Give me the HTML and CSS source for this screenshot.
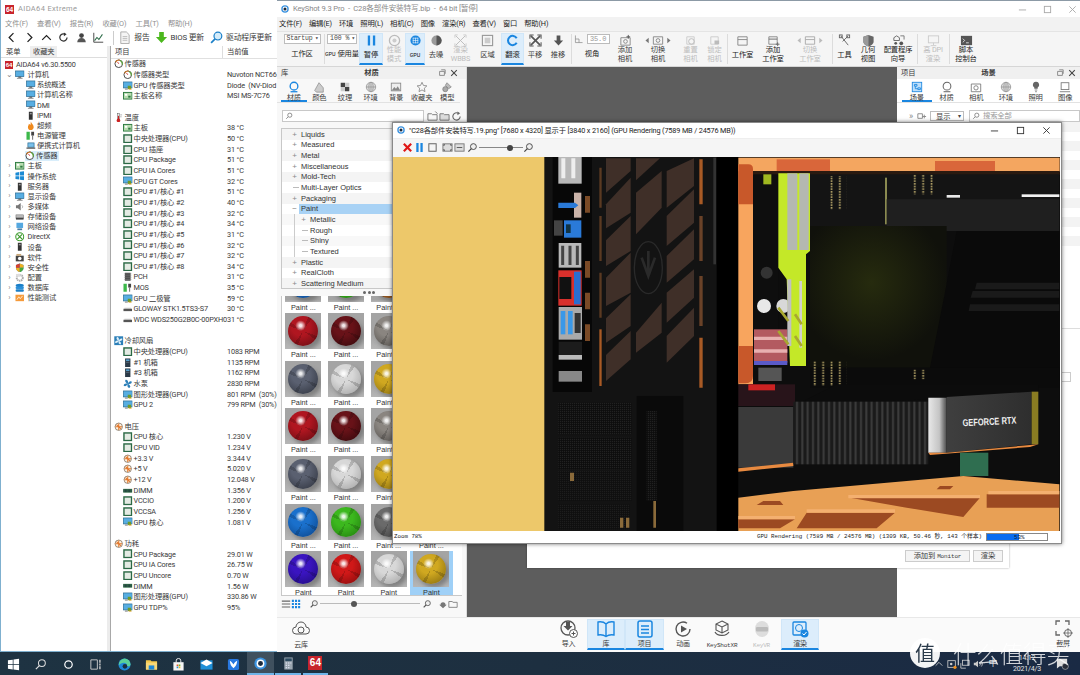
FILE: index.html
```html
<!DOCTYPE html>
<html lang="zh-CN">
<head>
<meta charset="utf-8">
<title>KeyShot</title>
<link rel="stylesheet" href="styles.css">
</head>
<body>
<svg class="defs" aria-hidden="true">
  <defs>
    <symbol id="chip" viewBox="0 0 10 10"><rect x="1" y="1" width="8" height="8" fill="#e4ebe4" stroke="#2c6a46" stroke-width="1.5"/></symbol>
    <symbol id="board" viewBox="0 0 10 10"><rect x=".5" y="1.5" width="9" height="7" fill="#b8dcb0" stroke="#2c7a40"/><rect x="2" y="3" width="2.5" height="2" fill="#fff"/><rect x="5.5" y="5" width="2.5" height="2" fill="#2c7a40"/></symbol>
    <symbol id="mon" viewBox="0 0 10 10"><rect x=".5" y="1" width="9" height="6" fill="#58aee2" stroke="#27688f" stroke-width=".7"/><rect x="3.5" y="7" width="3" height="1.2" fill="#555"/><rect x="2" y="8.2" width="6" height="1" fill="#888"/></symbol>
    <symbol id="gpu" viewBox="0 0 10 10"><rect x=".3" y="1" width="9.4" height="6.3" fill="#58aee2" stroke="#27688f" stroke-width=".7"/><rect x="5" y="5" width="3.5" height="3.5" fill="#6e9a2c"/><rect x="6" y="8" width="3" height="1" fill="#e0a020"/><rect x="2" y="8" width="3" height="1" fill="#777"/></symbol>
    <symbol id="gauge" viewBox="0 0 10 10"><circle cx="5" cy="5" r="4" fill="#fff" stroke="#444"/><path d="M1.6 3.5A4 4 0 0 1 6 1.2" fill="none" stroke="#d9781f" stroke-width="1.2"/><path d="M6.5 1.5A4 4 0 0 1 8.6 6" fill="none" stroke="#5aa83a" stroke-width="1.2"/><path d="M5 5 3.6 3" stroke="#c22" stroke-width=".9"/></symbol>
    <symbol id="therm" viewBox="0 0 10 10"><rect x="3.6" y=".5" width="2.2" height="6.5" fill="#eee" stroke="#555" stroke-width=".5"/><rect x="4.1" y="3" width="1.2" height="4" fill="#c22"/><circle cx="4.7" cy="7.8" r="1.9" fill="#c22"/><path d="M6.5 2h2M6.5 4h1.5" stroke="#777" stroke-width=".6"/></symbol>
    <symbol id="fan" viewBox="0 0 10 10"><rect x=".3" y=".3" width="9.4" height="9.4" fill="#2c7fb8"/><path d="M5 5C3 4 2 2.500 3 1.200 4.500 1 5.800 2.500 5 5ZM5 5C6 3 7.500 2 8.800 3 9 4.500 7.500 5.800 5 5ZM5 5C7 6 8 7.500 7 8.800 5.500 9 4.200 7.500 5 5ZM5 5C4 7 2.500 8 1.200 7 1 5.500 2.500 4.200 5 5Z" fill="#dff0fa"/></symbol>
    <symbol id="fan2" viewBox="0 0 10 10"><path d="M5 5C3 4 1.500 2.500 2.800 .8 4.800 .4 6 2.500 5 5ZM5 5C6 3 7.500 1.500 9.200 2.800 9.600 4.800 7.500 6 5 5ZM5 5C7 6 8.500 7.500 7.200 9.200 5.200 9.600 4 7.500 5 5ZM5 5C4 7 2.500 8.500 .8 7.200 .4 5.200 2.500 4 5 5Z" fill="#2c7fb8"/></symbol>
    <symbol id="volt" viewBox="0 0 10 10"><circle cx="5" cy="5" r="3.900" fill="#fff3e2" stroke="#6a5a48" stroke-width=".7"/><path d="M5 1.500V8.500M1.500 5H8.500M2.700 2.700 7.300 7.300" stroke="#e2762a" stroke-width="1.100"/></symbol>
    <symbol id="ram" viewBox="0 0 10 10"><rect x=".2" y="3" width="9.600" height="4" fill="#3c7a50"/><path d="M1 3.500v3M2.500 3.500v3M4 3.500v3M5.500 3.500v3M7 3.500v3M8.500 3.500v3" stroke="#123" stroke-width=".7"/></symbol>
    <symbol id="hdd" viewBox="0 0 10 10"><rect x=".5" y="5" width="9" height="2.500" fill="#555"/><rect x="1.500" y="4" width="7" height="1.200" fill="#bbb"/></symbol>
    <symbol id="tower" viewBox="0 0 10 10"><rect x="2.200" y=".5" width="5.600" height="9" fill="#2b3a48"/><rect x="3.200" y="1.500" width="3.600" height="1.600" fill="#5aa8d8"/><rect x="3.200" y="4" width="3.600" height="1" fill="#5a6a78"/></symbol>
    <symbol id="pch" viewBox="0 0 10 10"><rect x="2" y=".8" width="6" height="8.400" fill="#4a4a4a"/><path d="M1 2h8M1 4h8M1 6h8M1 8h8" stroke="#888" stroke-width=".5"/></symbol>
    <symbol id="mos" viewBox="0 0 10 10"><rect x=".5" y=".8" width="3.500" height="8.400" fill="#3cb84a"/><rect x="5.500" y=".8" width="3" height="4" fill="#444"/><rect x="6.500" y="4.800" width="1" height="4.400" fill="#666"/></symbol>
    <symbol id="fire" viewBox="0 0 10 10"><path d="M5 .5C6 3 8.500 4 8 7c-.4 2-2 2.500-3 2.500S2 9 2 6.500c0-1.500 1-2 1-3.500 1 .5 1.500 1 1.500 1.500C5 3 5 2 5 .5Z" fill="#ef8a1e"/></symbol>
    <symbol id="lap" viewBox="0 0 10 10"><rect x="2" y="2" width="6.500" height="4.500" fill="#7ac0ea" stroke="#27688f" stroke-width=".7"/><path d="M.5 7.500h9.500" stroke="#555" stroke-width="1.300"/></symbol>
    <symbol id="win" viewBox="0 0 10 10"><path d="M.5 1.800 4.500 1v3.700H.5ZM5.300.9 9.500.2v4.500H5.300ZM.5 5.400h4v3.600l-4-.7ZM5.300 5.400h4.200v4.400L5.300 9.100Z" fill="#1a8ad4"/></symbol>
    <symbol id="spk" viewBox="0 0 10 10"><path d="M1 3.500h2L6 1v8L3 6.500H1Z" fill="#777"/><path d="M7.300 3.500c1 1 1 2 0 3" stroke="#999" fill="none" stroke-width=".8"/></symbol>
    <symbol id="stor" viewBox="0 0 10 10"><rect x="1" y="3" width="8" height="4" fill="#bbb" stroke="#666" stroke-width=".5"/><rect x="1" y="6" width="8" height="2" fill="#444"/></symbol>
    <symbol id="net" viewBox="0 0 10 10"><rect x="1.500" y=".8" width="7" height="5.500" fill="#55a8e0"/><rect x="2.500" y="6.800" width="5" height="1.800" fill="#4a7aa0"/></symbol>
    <symbol id="xbox" viewBox="0 0 10 10"><circle cx="5" cy="5" r="4.200" fill="#fff" stroke="#3a9a2a" stroke-width="1.100"/><path d="M2.500 2.500 7.500 7.500M7.500 2.500 2.500 7.500" stroke="#3a9a2a" stroke-width="1.200"/></symbol>
    <symbol id="dev" viewBox="0 0 10 10"><rect x="3" y=".8" width="4" height="8.400" fill="#333"/><rect x="4" y="2" width="2" height="1.500" fill="#999"/></symbol>
    <symbol id="soft" viewBox="0 0 10 10"><rect x=".8" y="2.800" width="8.400" height="6" fill="#444"/><circle cx="5" cy="5.800" r="1.900" fill="#fff"/><rect x="1.500" y="1" width="5" height="2" fill="#c9a87a"/></symbol>
    <symbol id="shield" viewBox="0 0 10 10"><path d="M5 .5 9 2v3c0 2.500-2 4-4 4.800C3 9 1 7.500 1 5V2Z" fill="#3a8fd4"/><path d="M5 .5 9 2v3H5ZM5 5H1c0 2.500 2 4 4 4.800Z" fill="#f0b020"/><path d="M5 5H1V2L5 .5Z" fill="#d8402a"/><path d="M5 5h4c0 2.500-2 4-4 4.800Z" fill="#4aa83a"/></symbol>
    <symbol id="conf" viewBox="0 0 10 10"><circle cx="5" cy="5" r="3.200" fill="none" stroke="#aaa" stroke-width="2" stroke-dasharray="1.500 .6"/><rect x="1" y="1" width="5" height="3" fill="#ddd"/></symbol>
    <symbol id="db" viewBox="0 0 10 10"><ellipse cx="5" cy="2.500" rx="4.300" ry="1.700" fill="#1a7fc8"/><rect x=".7" y="3.800" width="8.600" height="2.400" rx="1" fill="#2c90d8"/><rect x=".7" y="6.700" width="8.600" height="2.500" rx="1" fill="#1a7fc8"/></symbol>
    <symbol id="bench" viewBox="0 0 10 10"><rect x=".5" y="1.800" width="9" height="6.800" fill="#f59a3a"/><path d="M2 7l2-3 1.500 2L8 3" stroke="#fff" fill="none" stroke-width=".8"/></symbol>
    <symbol id="logo64" viewBox="0 0 10 10"><rect width="10" height="10" fill="#c8242c"/></symbol>
    <symbol id="ksdot" viewBox="0 0 10 10"><circle cx="5" cy="5" r="4.700" fill="#3b93e0"/><circle cx="5" cy="5" r="3" fill="#fff"/><circle cx="5" cy="5" r="1.900" fill="#1c2a3c"/></symbol>
  </defs>
</svg>

<main class="desk">
  <div class="windows">

    <!-- AIDA64 -->
    <section class="win aida">
      <header class="a-title">
        <span class="a-logo">64</span><span>AIDA64 Extreme</span>
      </header>
      <nav class="a-menu"><span>文件(F)</span><span>查看(V)</span><span>报告(R)</span><span>收藏(O)</span><span>工具(T)</span><span>帮助(H)</span></nav>
      <div class="a-tools">
        <svg class="at" viewBox="0 0 14 14"><path d="M9.500 1.500 4 7l5.500 5.500" fill="none" stroke="#222" stroke-width="1.600"/></svg>
        <svg class="at" viewBox="0 0 14 14"><path d="M4.500 1.500 10 7l-5.500 5.500" fill="none" stroke="#222" stroke-width="1.600"/></svg>
        <svg class="at" viewBox="0 0 14 14"><path d="M1.500 10 7 4.500 12.500 10" fill="none" stroke="#222" stroke-width="1.600"/></svg>
        <svg class="at" viewBox="0 0 14 14"><path d="M11.500 7A4.600 4.600 0 1 1 9 2.800" fill="none" stroke="#333" stroke-width="1.600"/><path d="M7.500 .5 11 3 7.500 5.500Z" fill="#333"/></svg>
        <svg class="at" viewBox="0 0 14 14"><circle cx="7" cy="4.500" r="3" fill="#444"/><path d="M1.500 13c.5-4 2.500-5.500 5.500-5.500S12 9 12.500 13Z" fill="#555"/></svg>
        <svg class="at" viewBox="0 0 14 14"><path d="M1 1v12h12" fill="none" stroke="#333" stroke-width="1.100"/><path d="M2 11l3-4 2.500 2.500L12 3" fill="none" stroke="#2a6a46" stroke-width="1.300"/></svg>
        <span class="a-vsep"></span>
        <svg class="at big" viewBox="0 0 14 14"><path d="M3 1h6l3 3v9.500H3Z" fill="#f5f5f5" stroke="#aaa"/><path d="M5 6h5M5 8h5M5 10h5" stroke="#bbb"/></svg>
        <span class="a-tl">报告</span>
        <svg class="at big mlt" viewBox="0 0 14 14"><path d="M4.500 1h5v5.500h3.500L7 13 1 6.500h3.500Z" fill="#4cb81e"/></svg>
        <span class="a-tl">BIOS 更新</span>
        <svg class="at big mlt2" viewBox="0 0 14 14"><circle cx="8.500" cy="5.500" r="4.200" fill="#d4ecfa" stroke="#1a7fc8" stroke-width="1.300"/><path d="M5.500 8.500 1.200 12.800" stroke="#1a7fc8" stroke-width="1.800"/></svg>
        <span class="a-tl">驱动程序更新</span>
      </div>
      <div class="a-body">
        <aside class="a-left">
          <div class="a-tabs"><span class="a-tab on">菜单</span><span class="a-tab off">收藏夹</span></div>
          <div class="tree">
            <div class="t root"><span class="a-logo sm">64</span><span>AIDA64 v6.30.5500</span></div>
            <div class="t l1"><i class="ar">⌄</i><svg class="ic"><use href="#mon"/></svg><span>计算机</span></div>
            <div class="t l2"><svg class="ic"><use href="#mon"/></svg><span>系统概述</span></div>
            <div class="t l2"><svg class="ic"><use href="#mon"/></svg><span>计算机名称</span></div>
            <div class="t l2"><svg class="ic"><use href="#mon"/></svg><span>DMI</span></div>
            <div class="t l2"><svg class="ic"><use href="#dev"/></svg><span>IPMI</span></div>
            <div class="t l2"><svg class="ic"><use href="#fire"/></svg><span>超频</span></div>
            <div class="t l2"><svg class="ic"><use href="#mos"/></svg><span>电源管理</span></div>
            <div class="t l2"><svg class="ic"><use href="#lap"/></svg><span>便携式计算机</span></div>
            <div class="t l2"><span class="sel"><svg class="ic"><use href="#gauge"/></svg><span>传感器</span></span></div>
            <div class="t l1"><i class="ar">›</i><svg class="ic"><use href="#board"/></svg><span>主板</span></div>
            <div class="t l1"><i class="ar">›</i><svg class="ic"><use href="#win"/></svg><span>操作系统</span></div>
            <div class="t l1"><i class="ar">›</i><svg class="ic"><use href="#dev"/></svg><span>服务器</span></div>
            <div class="t l1"><i class="ar">›</i><svg class="ic"><use href="#mon"/></svg><span>显示设备</span></div>
            <div class="t l1"><i class="ar">›</i><svg class="ic"><use href="#spk"/></svg><span>多媒体</span></div>
            <div class="t l1"><i class="ar">›</i><svg class="ic"><use href="#stor"/></svg><span>存储设备</span></div>
            <div class="t l1"><i class="ar">›</i><svg class="ic"><use href="#net"/></svg><span>网络设备</span></div>
            <div class="t l1"><i class="ar">›</i><svg class="ic"><use href="#xbox"/></svg><span>DirectX</span></div>
            <div class="t l1"><i class="ar">›</i><svg class="ic"><use href="#dev"/></svg><span>设备</span></div>
            <div class="t l1"><i class="ar">›</i><svg class="ic"><use href="#soft"/></svg><span>软件</span></div>
            <div class="t l1"><i class="ar">›</i><svg class="ic"><use href="#shield"/></svg><span>安全性</span></div>
            <div class="t l1"><i class="ar">›</i><svg class="ic"><use href="#conf"/></svg><span>配置</span></div>
            <div class="t l1"><i class="ar">›</i><svg class="ic"><use href="#db"/></svg><span>数据库</span></div>
            <div class="t l1"><i class="ar">›</i><svg class="ic"><use href="#bench"/></svg><span>性能测试</span></div>
          </div>
        </aside>
        <div class="a-split"></div>
        <div class="a-right">
          <div class="a-head"><span class="h1">项目</span><span class="h2">当前值</span></div>
          <div class="list">
            <div class="r s"><span class="n"><svg class="ic"><use href="#gauge"/></svg>传感器</span></div>
            <div class="r"><span class="n"><svg class="ic"><use href="#gauge"/></svg>传感器类型</span><span class="v">Nuvoton NCT66</span></div>
            <div class="r"><span class="n"><svg class="ic"><use href="#gpu"/></svg>GPU 传感器类型</span><span class="v">Diode  (NV-Diod</span></div>
            <div class="r"><span class="n"><svg class="ic"><use href="#board"/></svg>主板名称</span><span class="v">MSI MS-7C76</span></div>
            <div class="r"></div>
            <div class="r s"><span class="n"><svg class="ic"><use href="#therm"/></svg>温度</span></div>
            <div class="r"><span class="n"><svg class="ic"><use href="#board"/></svg>主板</span><span class="v">38 °C</span></div>
            <div class="r"><span class="n"><svg class="ic"><use href="#chip"/></svg>中央处理器(CPU)</span><span class="v">50 °C</span></div>
            <div class="r"><span class="n"><svg class="ic"><use href="#chip"/></svg>CPU 插座</span><span class="v">31 °C</span></div>
            <div class="r"><span class="n"><svg class="ic"><use href="#chip"/></svg>CPU Package</span><span class="v">51 °C</span></div>
            <div class="r"><span class="n"><svg class="ic"><use href="#chip"/></svg>CPU IA Cores</span><span class="v">51 °C</span></div>
            <div class="r"><span class="n"><svg class="ic"><use href="#gpu"/></svg>CPU GT Cores</span><span class="v">32 °C</span></div>
            <div class="r"><span class="n"><svg class="ic"><use href="#chip"/></svg>CPU #1/核心 #1</span><span class="v">51 °C</span></div>
            <div class="r"><span class="n"><svg class="ic"><use href="#chip"/></svg>CPU #1/核心 #2</span><span class="v">40 °C</span></div>
            <div class="r"><span class="n"><svg class="ic"><use href="#chip"/></svg>CPU #1/核心 #3</span><span class="v">32 °C</span></div>
            <div class="r"><span class="n"><svg class="ic"><use href="#chip"/></svg>CPU #1/核心 #4</span><span class="v">34 °C</span></div>
            <div class="r"><span class="n"><svg class="ic"><use href="#chip"/></svg>CPU #1/核心 #5</span><span class="v">31 °C</span></div>
            <div class="r"><span class="n"><svg class="ic"><use href="#chip"/></svg>CPU #1/核心 #6</span><span class="v">32 °C</span></div>
            <div class="r"><span class="n"><svg class="ic"><use href="#chip"/></svg>CPU #1/核心 #7</span><span class="v">32 °C</span></div>
            <div class="r"><span class="n"><svg class="ic"><use href="#chip"/></svg>CPU #1/核心 #8</span><span class="v">34 °C</span></div>
            <div class="r"><span class="n"><svg class="ic"><use href="#pch"/></svg>PCH</span><span class="v">31 °C</span></div>
            <div class="r"><span class="n"><svg class="ic"><use href="#mos"/></svg>MOS</span><span class="v">35 °C</span></div>
            <div class="r"><span class="n"><svg class="ic"><use href="#gpu"/></svg>GPU 二极管</span><span class="v">59 °C</span></div>
            <div class="r"><span class="n"><svg class="ic"><use href="#hdd"/></svg>GLOWAY STK1.5TS3-S7</span><span class="v">30 °C</span></div>
            <div class="r"><span class="n"><svg class="ic"><use href="#hdd"/></svg>WDC WDS250G2B0C-00PXH0</span><span class="v">31 °C</span></div>
            <div class="r"></div>
            <div class="r s"><span class="n"><svg class="ic"><use href="#fan"/></svg>冷却风扇</span></div>
            <div class="r"><span class="n"><svg class="ic"><use href="#chip"/></svg>中央处理器(CPU)</span><span class="v">1083 RPM</span></div>
            <div class="r"><span class="n"><svg class="ic"><use href="#tower"/></svg>#1 机箱</span><span class="v">1135 RPM</span></div>
            <div class="r"><span class="n"><svg class="ic"><use href="#tower"/></svg>#3 机箱</span><span class="v">1162 RPM</span></div>
            <div class="r"><span class="n"><svg class="ic"><use href="#fan2"/></svg>水泵</span><span class="v">2830 RPM</span></div>
            <div class="r"><span class="n"><svg class="ic"><use href="#gpu"/></svg>图形处理器(GPU)</span><span class="v">801 RPM  (30%)</span></div>
            <div class="r"><span class="n"><svg class="ic"><use href="#gpu"/></svg>GPU 2</span><span class="v">799 RPM  (30%)</span></div>
            <div class="r"></div>
            <div class="r s"><span class="n"><svg class="ic"><use href="#volt"/></svg>电压</span></div>
            <div class="r"><span class="n"><svg class="ic"><use href="#chip"/></svg>CPU 核心</span><span class="v">1.230 V</span></div>
            <div class="r"><span class="n"><svg class="ic"><use href="#chip"/></svg>CPU VID</span><span class="v">1.234 V</span></div>
            <div class="r"><span class="n"><svg class="ic"><use href="#volt"/></svg>+3.3 V</span><span class="v">3.344 V</span></div>
            <div class="r"><span class="n"><svg class="ic"><use href="#volt"/></svg>+5 V</span><span class="v">5.020 V</span></div>
            <div class="r"><span class="n"><svg class="ic"><use href="#volt"/></svg>+12 V</span><span class="v">12.048 V</span></div>
            <div class="r"><span class="n"><svg class="ic"><use href="#ram"/></svg>DIMM</span><span class="v">1.356 V</span></div>
            <div class="r"><span class="n"><svg class="ic"><use href="#chip"/></svg>VCCIO</span><span class="v">1.200 V</span></div>
            <div class="r"><span class="n"><svg class="ic"><use href="#chip"/></svg>VCCSA</span><span class="v">1.256 V</span></div>
            <div class="r"><span class="n"><svg class="ic"><use href="#gpu"/></svg>GPU 核心</span><span class="v">1.081 V</span></div>
            <div class="r"></div>
            <div class="r s"><span class="n"><svg class="ic"><use href="#volt"/></svg>功耗</span></div>
            <div class="r"><span class="n"><svg class="ic"><use href="#chip"/></svg>CPU Package</span><span class="v">29.01 W</span></div>
            <div class="r"><span class="n"><svg class="ic"><use href="#chip"/></svg>CPU IA Cores</span><span class="v">26.75 W</span></div>
            <div class="r"><span class="n"><svg class="ic"><use href="#chip"/></svg>CPU Uncore</span><span class="v">0.70 W</span></div>
            <div class="r"><span class="n"><svg class="ic"><use href="#ram"/></svg>DIMM</span><span class="v">1.56 W</span></div>
            <div class="r"><span class="n"><svg class="ic"><use href="#gpu"/></svg>图形处理器(GPU)</span><span class="v">330.86 W</span></div>
            <div class="r"><span class="n"><svg class="ic"><use href="#gpu"/></svg>GPU TDP%</span><span class="v">95%</span></div>
          </div>
        </div>
      </div>
    </section>

    <!-- KeyShot -->
    <section class="win ks">
      <header class="k-title">
        <svg class="ki"><use href="#ksdot"/></svg>
        <span class="k-name">KeyShot 9.3 Pro  -  C28各部件安装特写.bip  -  64 bit [暂停]</span>
        <div class="ctl faded">
          <svg viewBox="0 0 10 10"><path d="M1 5.500h8" stroke="currentColor"/></svg>
          <svg viewBox="0 0 10 10"><rect x="1.500" y="1.500" width="7" height="7" fill="none" stroke="currentColor"/></svg>
          <svg viewBox="0 0 10 10"><path d="M1.500 1.500l7 7M8.500 1.500l-7 7" stroke="currentColor"/></svg>
        </div>
      </header>
      <nav class="k-menu"><span>文件(F)</span><span>编辑(E)</span><span>环境</span><span>照明(L)</span><span>相机(C)</span><span>图像</span><span>渲染(R)</span><span>查看(V)</span><span>窗口</span><span>帮助(H)</span></nav>
      <div class="k-tools">
        <div class="grp w42"><span class="select wide">Startup<i>▾</i></span><span class="lab">工作区</span></div>
        <span class="sep"></span>
        <div class="grp w34"><span class="select">100 %<i>▾</i></span><span class="lab nw"><tt>GPU</tt> 使用量</span></div>
        <div class="btn w24 act"><svg viewBox="0 0 14 14"><path d="M3 1.500h2.500v11H3ZM8.500 1.500H11v11H8.500Z" fill="#1a86e0"/></svg><span class="lab blk">暂停</span></div>
        <div class="btn w22 dim"><svg viewBox="0 0 14 14"><circle cx="7" cy="7" r="5.500" fill="none" stroke="#bbb" stroke-width="1.400"/><circle cx="7" cy="7" r="2.200" fill="#ccc"/></svg><span class="lab">性能<br>模式</span></div>
        <div class="btn w20 act"><svg viewBox="0 0 14 14"><circle cx="7" cy="7" r="5.500" fill="#1a86e0"/><path d="M4 4.500h6M4 7h6M4 9.500h6M4.500 4v6M7 4v6M9.500 4v6" stroke="#fff" stroke-width=".6"/></svg><span class="lab blk"><tt>GPU</tt></span></div>
        <div class="btn w22"><svg viewBox="0 0 14 14"><circle cx="7" cy="7" r="5.500" fill="#9a9a9a"/><path d="M7 1.500a5.500 5.500 0 0 1 0 11Z" fill="#555"/></svg><span class="lab">去噪</span></div>
        <div class="btn w27 dim"><svg viewBox="0 0 14 14"><path d="M2 2l10 10M12 2 2 12" stroke="#bbb" stroke-width="1"/><path d="M1 4V1h3M10 1h3v3M13 10v3h-3M4 13H1v-3" fill="none" stroke="#ccc"/></svg><span class="lab">渲染<br>WBBS</span></div>
        <div class="btn w27"><svg viewBox="0 0 14 14"><rect x="1.500" y="1.500" width="11" height="11" fill="none" stroke="#999" stroke-width="1.200"/><rect x="4" y="4" width="6" height="6" fill="#ccc"/></svg><span class="lab">区域</span></div>
        <div class="btn w23 act"><svg viewBox="0 0 14 14"><path d="M11.500 9.500A5 5 0 1 1 11.500 4.500" fill="none" stroke="#1a86e0" stroke-width="2.200"/></svg><span class="lab blk">翻滚</span></div>
        <div class="btn w22"><svg viewBox="0 0 14 14"><path d="M2 2l10 10M12 2 2 12" stroke="#555" stroke-width="1.800"/><path d="M1 5V1h4M9 1h4v4M13 9v4H9M5 13H1V9" fill="none" stroke="#555" stroke-width="1.100"/></svg><span class="lab">平移</span></div>
        <div class="btn w24"><svg viewBox="0 0 14 14"><path d="M5 1.500h4v5.500h3L7 12.500 2 7h3Z" fill="#555"/></svg><span class="lab">推移</span></div>
        <span class="sep"></span>
        <div class="grp w40"><div class="fov"><svg viewBox="0 0 14 14"><path d="M2 2v10h10M2 7h5v5" fill="none" stroke="#888"/></svg><span class="num">35.0</span></div><span class="lab">视角</span></div>
        <div class="btn w26"><svg viewBox="0 0 14 14"><path d="M2 4h10v8H2Z" fill="none" stroke="#888"/><circle cx="7" cy="8" r="2" fill="none" stroke="#888"/><path d="M10 1v4M8 3h4" stroke="#555"/></svg><span class="lab">添加<br>相机</span></div>
        <div class="btn w40"><svg class="wideic" viewBox="0 0 30 14"><path d="M5 4 1.500 7 5 10Z M25 4 28.500 7 25 10Z" fill="#777"/><path d="M10 3h10v8H10Z" fill="none" stroke="#888"/><circle cx="15" cy="7" r="2" fill="none" stroke="#888"/></svg><span class="lab">切换<br>相机</span></div>
        <div class="btn w25 dim"><svg viewBox="0 0 14 14"><path d="M3 3h8v8H3Z" fill="none" stroke="#ccc"/><circle cx="8" cy="8" r="3" fill="none" stroke="#bbb"/></svg><span class="lab">重置<br>相机</span></div>
        <div class="btn w23 dim"><svg viewBox="0 0 14 14"><path d="M3 3h8v8H3Z" fill="none" stroke="#ccc"/><rect x="7" y="7" width="5" height="4" fill="#bbb"/></svg><span class="lab">锁定<br>相机</span></div>
        <span class="sep"></span>
        <div class="btn w29"><svg viewBox="0 0 14 14"><path d="M2 3h10v9H2Z" fill="none" stroke="#888"/><path d="M2 6h10" stroke="#888"/></svg><span class="lab blk">工作室</span></div>
        <div class="btn w32"><svg viewBox="0 0 14 14"><path d="M2 3h9v8H2Z" fill="none" stroke="#888"/><path d="M2 5.500h9M11.500 9v4M9.500 11h4" stroke="#666"/></svg><span class="lab blk">添加<br>工作室</span></div>
        <div class="btn w42 dim"><svg class="wideic" viewBox="0 0 30 14"><path d="M5 4 1.500 7 5 10Z M25 4 28.500 7 25 10Z" fill="#bbb"/><path d="M10 3h10v8H10ZM10 6h10" fill="none" stroke="#aaa"/></svg><span class="lab">切换<br>工作室</span></div>
        <span class="sep"></span>
        <div class="btn w23"><svg viewBox="0 0 14 14"><path d="M3 2l8 10M11 2 5 8" stroke="#666" fill="none"/><rect x="1.500" y="1" width="3" height="3" fill="none" stroke="#666"/><rect x="9.500" y="1" width="3" height="3" fill="none" stroke="#666"/></svg><span class="lab blk">工具</span></div>
        <div class="btn w24"><svg viewBox="0 0 14 14"><path d="M7 1 12.500 3v5c0 3-3 4.500-5.500 5.500C4.500 12.500 1.500 11 1.500 8V3Z" fill="#666"/><path d="M7 1v12.500C4.500 12.500 1.500 11 1.500 8V3Z" fill="#999"/></svg><span class="lab blk">几何<br>视图</span></div>
        <div class="btn w36"><svg viewBox="0 0 14 14"><path d="M2 4l3-2 3 2v3H2Z" fill="none" stroke="#666"/><circle cx="4" cy="10" r="1.500" fill="#555"/><circle cx="10" cy="10" r="2" fill="#555"/><path d="M9 2h4v4" fill="none" stroke="#777"/></svg><span class="lab blk">配置程序<br>向导</span></div>
        <span class="sep"></span>
        <div class="btn w30 dim"><svg viewBox="0 0 14 14"><rect x="1.500" y="2" width="11" height="7.500" fill="none" stroke="#ccc"/><path d="M7 9.500V12M4 12.500h6" stroke="#ccc"/></svg><span class="lab">高 DPI<br>渲染</span></div>
        <span class="sep"></span>
        <div class="btn w32"><svg viewBox="0 0 14 14"><rect x="1" y="2" width="12" height="10" fill="#555"/><path d="M3 5l2 2-2 2M6.500 9.500h3" stroke="#fff" fill="none" stroke-width=".8"/></svg><span class="lab blk">脚本<br>控制台</span></div>
      </div>

      <div class="k-body">
        <div class="pane lib">
          <div class="p-title"><span>库</span><b>材质</b><div class="p-ic"><svg viewBox="0 0 10 10"><path d="M2 3h6v5H2Z M4 1h5v5" fill="none" stroke="#777"/></svg><svg viewBox="0 0 10 10"><path d="M1.500 1.500l7 7M8.500 1.500l-7 7" stroke="#444" stroke-width="1.300"/></svg></div></div>
          <div class="tabs seven">
            <div class="tab on"><svg viewBox="0 0 14 14"><circle cx="7" cy="6" r="4.500" fill="none" stroke="#1a86e0" stroke-width="1.600"/><path d="M3 12.500h8" stroke="#1a86e0" stroke-width="1.500"/></svg><span>材质</span></div>
            <div class="tab"><svg viewBox="0 0 14 14"><path d="M2 11 7 2l5 6v5H4Z" fill="#ccc" stroke="#888" stroke-width=".8"/></svg><span>颜色</span></div>
            <div class="tab"><svg viewBox="0 0 14 14"><path d="M2 2h5v5H2ZM7 7h5v5H7Z" fill="#444"/><path d="M7 2h5v5H7ZM2 7h5v5H2Z" fill="#ccc"/></svg><span>纹理</span></div>
            <div class="tab"><svg viewBox="0 0 14 14"><circle cx="7" cy="7" r="5.500" fill="#ddd" stroke="#999"/><path d="M1.500 7h11M7 1.500v11" stroke="#999"/><ellipse cx="7" cy="7" rx="2.500" ry="5.500" fill="none" stroke="#999"/></svg><span>环境</span></div>
            <div class="tab"><svg viewBox="0 0 14 14"><rect x="1.500" y="2.500" width="11" height="9" fill="#eee" stroke="#888"/><path d="M2 11l3-4 2 2 2-3 3 5" fill="#888"/></svg><span>背景</span></div>
            <div class="tab"><svg viewBox="0 0 14 14"><path d="M7 1.500 8.700 5.200 12.700 5.700 9.700 8.400 10.500 12.400 7 10.400 3.500 12.400 4.300 8.400 1.300 5.700 5.300 5.200Z" fill="none" stroke="#888"/></svg><span>收藏夹</span></div>
            <div class="tab"><svg viewBox="0 0 14 14"><circle cx="5" cy="9.500" r="3" fill="#aaa" stroke="#666" stroke-width=".6"/><path d="M7 2l5 5-3 2-4-4Z" fill="#bbb" stroke="#666" stroke-width=".6"/></svg><span>模型</span></div>
          </div>
          <div class="search-row">
            <div class="field"><svg viewBox="0 0 10 10"><circle cx="6" cy="4" r="2.600" fill="none" stroke="#777"/><path d="M4 6 1.500 8.500" stroke="#777"/></svg></div>
            <svg class="si" viewBox="0 0 12 12"><path d="M1 3h4l1 1h5v6H1Z" fill="none" stroke="#777"/><path d="M9 .5 11.500 3" stroke="#777"/></svg>
            <svg class="si" viewBox="0 0 12 12"><path d="M1 3h4l1 1h5v6H1Z" fill="#ddd" stroke="#777"/></svg>
            <svg class="si" viewBox="0 0 12 12"><path d="M10 6A4 4 0 1 1 8 2.500" fill="none" stroke="#666" stroke-width="1.200"/><path d="M7 .5 10 2.500 7 4.500Z" fill="#666"/></svg>
          </div>
          <div class="mtree">
            <div class="m"><i>+</i>Liquids</div>
            <div class="m"><i>+</i>Measured</div>
            <div class="m"><i>+</i>Metal</div>
            <div class="m"><i>+</i>Miscellaneous</div>
            <div class="m"><i>+</i>Mold-Tech</div>
            <div class="m"><i class="leaf"></i>Multi-Layer Optics</div>
            <div class="m"><i>+</i>Packaging</div>
            <div class="m sel2"><i>−</i><span>Paint</span></div>
            <div class="m sub"><i>+</i>Metallic</div>
            <div class="m sub"><i class="leaf"></i>Rough</div>
            <div class="m sub"><i class="leaf"></i>Shiny</div>
            <div class="m sub"><i class="leaf"></i>Textured</div>
            <div class="m"><i>+</i>Plastic</div>
            <div class="m"><i>+</i>RealCloth</div>
            <div class="m"><i>+</i>Scattering Medium</div>
          </div>
          <div class="dots"><i></i><i></i><i></i></div>
          <div class="grid">
            <div class="c top"><div class="tile blue"><i></i></div><span>Paint ...</span></div>
            <div class="c top"><div class="tile green"><i></i></div><span>Paint ...</span></div>
            <div class="c top"><div class="tile amber"><i></i></div><span>Paint ...</span></div>
            <div class="c top"><div class="tile amber"><i></i></div><span>Paint ...</span></div>
            <div class="c"><div class="tile red"><i></i></div><span>Paint ...</span></div>
            <div class="c"><div class="tile wine"><i></i></div><span>Paint ...</span></div>
            <div class="c"><div class="tile gray"><i></i></div><span>Paint ...</span></div>
            <div class="c"><div class="tile gray"><i></i></div><span>Paint ...</span></div>
            <div class="c"><div class="tile slate"><i></i></div><span>Paint ...</span></div>
            <div class="c"><div class="tile silver"><i></i></div><span>Paint ...</span></div>
            <div class="c"><div class="tile gold"><i></i></div><span>Paint ...</span></div>
            <div class="c"><div class="tile gold"><i></i></div><span>Paint ...</span></div>
            <div class="c"><div class="tile red"><i></i></div><span>Paint ...</span></div>
            <div class="c"><div class="tile wine"><i></i></div><span>Paint ...</span></div>
            <div class="c"><div class="tile gray"><i></i></div><span>Paint ...</span></div>
            <div class="c"><div class="tile gray"><i></i></div><span>Paint ...</span></div>
            <div class="c"><div class="tile slate"><i></i></div><span>Paint ...</span></div>
            <div class="c"><div class="tile silver"><i></i></div><span>Paint ...</span></div>
            <div class="c"><div class="tile gold"><i></i></div><span>Paint ...</span></div>
            <div class="c"><div class="tile gold"><i></i></div><span>Paint ...</span></div>
            <div class="c"><div class="tile blue"><i></i></div><span>Paint ...</span></div>
            <div class="c"><div class="tile green"><i></i></div><span>Paint ...</span></div>
            <div class="c"><div class="tile dark"><i></i></div><span>Paint ...</span></div>
            <div class="c"><div class="tile dark"><i></i></div><span>Paint ...</span></div>
            <div class="c"><div class="tile violet"><i></i></div><span>Paint</span></div>
            <div class="c"><div class="tile scarlet"><i></i></div><span>Paint</span></div>
            <div class="c"><div class="tile silver"><i></i></div><span>Paint</span></div>
            <div class="c picked"><div class="tile gold"><i></i></div><span>Paint</span></div>
          </div>
          <div class="zoomrow">
            <svg class="si" viewBox="0 0 12 12"><path d="M1 2.500h10M1 6h10M1 9.500h10" stroke="#666" stroke-width="1.300"/></svg>
            <svg class="si" viewBox="0 0 12 12"><path d="M1 1h2.500v2.500H1ZM4.800 1h2.500v2.500H4.800ZM8.500 1H11v2.500H8.500ZM1 4.800h2.500v2.500H1ZM4.800 4.800h2.500v2.500H4.800ZM8.500 4.800H11v2.500H8.500ZM1 8.500h2.500V11H1ZM4.800 8.500h2.500V11H4.800ZM8.500 8.500H11V11H8.500Z" fill="#1a86e0"/></svg>
            <svg class="si mz" viewBox="0 0 12 12"><circle cx="7" cy="5" r="3" fill="#eee" stroke="#555"/><path d="M4.800 7.200 2 10" stroke="#555" stroke-width="1.300"/></svg>
            <div class="slider"><i></i></div>
            <svg class="si" viewBox="0 0 12 12"><circle cx="7" cy="5" r="3" fill="#eee" stroke="#555"/><path d="M4.800 7.200 2 10" stroke="#555" stroke-width="1.300"/></svg>
            <svg class="si mz2" viewBox="0 0 12 12"><path d="M3 7a3 3 0 0 1 6 0h1.500L6 11 1.500 7Z" fill="#777"/></svg>
            <svg class="si" viewBox="0 0 12 12"><path d="M1 3h4l1 1h5v6H1Z" fill="none" stroke="#777"/></svg>
          </div>
        </div>

        <div class="view"></div>

        <div class="pane scene">
          <div class="p-title"><span>项目</span><b>场景</b><div class="p-ic"><svg viewBox="0 0 10 10"><path d="M2 3h6v5H2Z M4 1h5v5" fill="none" stroke="#777"/></svg><svg viewBox="0 0 10 10"><path d="M1.500 1.500l7 7M8.500 1.500l-7 7" stroke="#444" stroke-width="1.300"/></svg></div></div>
          <div class="tabs six">
            <div class="tab on"><svg viewBox="0 0 14 14"><rect x="1.500" y="1.500" width="11" height="11" fill="#bfe0fb" stroke="#1a86e0"/><path d="M4 4h3v2H4ZM8 8h3v2H8ZM5 6v3h3" fill="none" stroke="#1a86e0"/></svg><span>场景</span></div>
            <div class="tab"><svg viewBox="0 0 14 14"><circle cx="7" cy="6" r="4.500" fill="none" stroke="#666" stroke-width="1.200"/><path d="M3 12.500h8" stroke="#666" stroke-width="1.200"/></svg><span>材质</span></div>
            <div class="tab"><svg viewBox="0 0 14 14"><path d="M1.500 3.500h11v9h-11Z" fill="none" stroke="#777"/><circle cx="7" cy="8" r="2.500" fill="none" stroke="#777"/></svg><span>相机</span></div>
            <div class="tab"><svg viewBox="0 0 14 14"><circle cx="7" cy="7" r="5.500" fill="#ddd" stroke="#999"/><path d="M1.500 7h11M7 1.500v11" stroke="#999"/><ellipse cx="7" cy="7" rx="2.500" ry="5.500" fill="none" stroke="#999"/></svg><span>环境</span></div>
            <div class="tab"><svg viewBox="0 0 14 14"><path d="M7 1a3.500 3.500 0 0 1 2 6.500V9H5V7.500A3.500 3.500 0 0 1 7 1Z" fill="#666"/><path d="M5.500 10.500h3M6 12.500h2" stroke="#777"/></svg><span>照明</span></div>
            <div class="tab"><svg viewBox="0 0 14 14"><rect x="2.500" y="2" width="9" height="8" fill="none" stroke="#777"/><path d="M1 12.500h12" stroke="#777"/></svg><span>图像</span></div>
          </div>
          <div class="scene-row">
            <span class="dbl">»</span>
            <svg class="si" viewBox="0 0 12 12"><path d="M2 3h5v5H2Z" fill="none" stroke="#888"/><path d="M7 6h4M9 4v4" stroke="#888"/></svg>
            <span class="select disp">显示<i>▾</i></span>
            <div class="field sf"><svg viewBox="0 0 10 10"><circle cx="6" cy="4" r="2.600" fill="none" stroke="#777"/><path d="M4 6 1.500 8.500" stroke="#777"/></svg><span>搜索全部</span></div>
          </div>
          <div class="stripes"><i></i><i></i><i></i><i></i><i></i><i></i><i></i></div>
          <div class="rule"></div>
          <div class="mini"></div>
        </div>
      </div>

      <div class="k-foot">
        <div class="fb cloud"><svg viewBox="0 0 20 20"><path d="M5 14a3.500 3.500 0 0 1 0-7 5 5 0 0 1 10 0 3.500 3.500 0 0 1 0 7Z" fill="none" stroke="#555"/><circle cx="10" cy="10" r="3" fill="none" stroke="#555"/></svg><span>云库</span></div>
        <span class="f-gap"></span>
        <div class="fb w37"><svg viewBox="0 0 20 20"><circle cx="9" cy="9" r="7" fill="none" stroke="#555" stroke-width="1.300"/><path d="M7 3h4v4h2.500L9 11.500 4.500 7H7Z" fill="#555"/><circle cx="14.500" cy="14.500" r="4" fill="#fff" stroke="#555"/><path d="M12.500 14.500h4M14.500 12.500v4" stroke="#555"/></svg><span>导入</span></div>
        <div class="fb w38 act"><svg viewBox="0 0 20 20"><path d="M10 5C8 3 5 2.500 2 3v13c3-.5 6 0 8 1.500 2-1.500 5-2 8-1.500V3c-3-.5-6 0-8 2ZM10 5v12.500" fill="none" stroke="#1a86e0" stroke-width="1.400"/></svg><span>库</span></div>
        <div class="fb w39 act"><svg viewBox="0 0 20 20"><rect x="3" y="2" width="14" height="16" rx="2" fill="none" stroke="#1a86e0" stroke-width="1.500"/><path d="M6 7h8M6 10.500h8M6 14h8" stroke="#1a86e0" stroke-width="1.300"/></svg><span>项目</span></div>
        <div class="fb w38"><svg viewBox="0 0 20 20"><path d="M17 10a7 7 0 1 1-3-5.700" fill="none" stroke="#555" stroke-width="1.400"/><path d="M8 6.500v7l6-3.500Z" fill="#555"/></svg><span>动画</span></div>
        <div class="fb w40"><svg viewBox="0 0 20 20"><path d="M10 2 16 5v6l-6 3-6-3V5ZM4 5l6 3 6-3M10 8v6" fill="none" stroke="#555" stroke-width="1.100"/><path d="M3 13c2 4 11 5 14 0" fill="none" stroke="#555" stroke-width="1.200"/></svg><span class="mono">KeyShotXR</span></div>
        <div class="fb w39 dim"><svg viewBox="0 0 20 20"><ellipse cx="10" cy="10" rx="7" ry="8" fill="#ddd"/><rect x="4" y="8" width="12" height="4.500" rx="1" fill="#bbb"/></svg><span class="mono">KeyVR</span></div>
        <div class="fb w38 act"><svg viewBox="0 0 20 20"><rect x="3" y="3" width="13" height="13" rx="1" fill="none" stroke="#1a86e0" stroke-width="1.300"/><circle cx="9" cy="9" r="3.500" fill="none" stroke="#1a86e0"/><circle cx="14.500" cy="14.500" r="4" fill="#1a86e0"/><path d="M12.500 14.500l1.500 1.500 2.500-3" fill="none" stroke="#fff"/></svg><span>渲染</span></div>
        <span class="f-fill"></span>
        <div class="fb w34"><svg viewBox="0 0 20 20"><path d="M3 6V2h4M12 2h4v4M3 12v4h4" fill="none" stroke="#666" stroke-width="1.300"/><circle cx="15" cy="14" r="3.500" fill="none" stroke="#666"/><path d="M15 9v10M10 14h10" stroke="#666" stroke-width=".8"/></svg><span>截屏</span></div>
      </div>
    </section>

    <!-- output dialog behind the render window -->
    <section class="win monitor">
      <div class="m-btns"><span class="mbtn">添加到 <tt>Monitor</tt></span><span class="mbtn short">渲染</span></div>
    </section>

    <!-- Render window -->
    <section class="win render">
      <header class="r-title">
        <svg class="ki"><use href="#ksdot"/></svg>
        <span>"C28各部件安装特写.19.png" [7680 x 4320] 显示于 [3840 x 2160] (GPU Rendering (7589 MB / 24576 MB))</span>
        <div class="ctl r-ctl">
          <svg viewBox="0 0 10 10"><path d="M1 5.500h8" stroke="currentColor"/></svg>
          <svg viewBox="0 0 10 10"><rect x="1.500" y="1.500" width="7" height="7" fill="none" stroke="currentColor"/></svg>
          <svg viewBox="0 0 10 10"><path d="M1.500 1.500l7 7M8.500 1.500l-7 7" stroke="currentColor"/></svg>
        </div>
      </header>
      <div class="r-tools">
        <svg viewBox="0 0 12 12"><path d="M2 2l8 8M10 2l-8 8" stroke="#e01818" stroke-width="2.400"/></svg>
        <svg viewBox="0 0 12 12"><path d="M2.500 1h2.500v10H2.500ZM7 1h2.500v10H7Z" fill="#1a86e0"/></svg>
        <svg viewBox="0 0 12 12"><path d="M2 2h8v8H2Z" fill="none" stroke="#666" stroke-width="1.100"/></svg>
        <svg class="gapl" viewBox="0 0 12 12"><rect x="1" y="2" width="10" height="8" fill="#ddd" stroke="#777"/><path d="M2 4V3h1M10 4V3H9M2 8v1h1M10 8v1H9" stroke="#333" fill="none"/></svg>
        <svg viewBox="0 0 12 12"><rect x="1" y="2" width="10" height="8" fill="#ddd" stroke="#777"/><path d="M3 6h6" stroke="#555"/></svg>
        <svg viewBox="0 0 12 12"><circle cx="7" cy="5" r="3.200" fill="#eee" stroke="#444"/><path d="M4.800 7.200 1.500 10.500" stroke="#444" stroke-width="1.400"/></svg>
        <div class="r-slider"><i></i></div>
        <svg viewBox="0 0 12 12"><circle cx="7" cy="5" r="3.200" fill="#eee" stroke="#444"/><path d="M4.800 7.200 1.500 10.500" stroke="#444" stroke-width="1.400"/></svg>
      </div>

      <svg class="shot" viewBox="393 156 667 374" preserveAspectRatio="none">
        <defs>
          <pattern id="vent" width="6" height="6" patternUnits="userSpaceOnUse"><rect width="6" height="6" fill="#0c0c0c"/><rect width="3.500" height="3.500" fill="#212121"/></pattern>
          <pattern id="fins" width="16" height="10" patternUnits="userSpaceOnUse"><rect width="16" height="10" fill="#1a1a1a"/><rect x="6" width="6" height="10" fill="#3c3c3c"/></pattern>
          <pattern id="gold" width="25" height="8" patternUnits="userSpaceOnUse"><rect x="2" width="5" height="5" fill="#b5a468"/></pattern>
          <linearGradient id="silver" x1="0" x2="1"><stop offset="0" stop-color="#e8e8e8"/><stop offset=".6" stop-color="#c4c4c4"/><stop offset="1" stop-color="#4a4a4a"/></linearGradient>
          <linearGradient id="plate" x1="0" x2="1"><stop offset="0" stop-color="#3f3f3f"/><stop offset="1" stop-color="#2e2e2e"/></linearGradient>
          <radialGradient id="olive" cx=".45" cy=".4" r=".55"><stop offset="0" stop-color="#262b0e"/><stop offset="1" stop-color="#10110b"/></radialGradient>
        </defs>
        <rect x="393" y="156" width="667" height="374" fill="#0a0a0a"/>
        <rect x="393" y="156" width="151.500" height="374" fill="#edc86a"/>

        <g transform="translate(540 150) scale(.33333)">
          <rect x="14" y="18" width="520" height="1122" fill="#131313"/>
          <rect x="530" y="18" width="65" height="1122" fill="#000"/>
          <rect x="38" y="18" width="118" height="705" fill="#070707"/>
          <rect x="55" y="18" width="70" height="80" fill="#b8b8b8"/>
          <path d="M70 22v60M100 22v60" stroke="#eee" stroke-width="12"/>
          <rect x="102" y="125" width="22" height="75" fill="#c9b2a8"/>
          <path d="M55 155h50l10 8-10 8H55Z" fill="#2a7ad8"/>
          <rect x="42" y="208" width="26" height="46" fill="#444"/>
          <rect x="72" y="208" width="52" height="52" fill="#2a7ad8"/>
          <rect x="78" y="220" width="14" height="26" fill="#134"/>
          <rect x="56" y="276" width="68" height="74" fill="#b8b8b8"/>
          <path d="M68 284v58M90 284v58M112 284v58" stroke="#444" stroke-width="9"/>
          <rect x="55" y="358" width="70" height="106" fill="#d8302c"/>
          <rect x="58" y="378" width="36" height="66" fill="#111"/>
          <rect x="102" y="362" width="20" height="98" fill="#2a6ed0"/>
          <rect x="56" y="468" width="70" height="98" fill="#aaa"/>
          <rect x="62" y="480" width="14" height="70" fill="#3a98e8"/>
          <rect x="84" y="480" width="14" height="70" fill="#3a98e8"/>
          <rect x="104" y="486" width="18" height="60" fill="#333"/>
          <rect x="56" y="572" width="70" height="44" fill="#1c1c1c"/>
          <rect x="56" y="612" width="70" height="14" fill="#bbb"/>
          <rect x="56" y="660" width="70" height="32" fill="#888"/>
          <path d="M135 135h15v50h-15ZM135 330h15v50h-15ZM135 425h15v50h-15ZM135 520h15v50h-15Z" fill="#7a4a26"/>
          <path d="M178 50h7v120h-7ZM178 195h7v135h-7ZM178 365h7v135h-7Z" fill="#5a3a22"/>
          <path d="M178 535h7v170h-7Z" fill="#a85a25"/>
          <path d="M478 25h10v135h-10ZM478 560h10v150h-10Z" fill="#a85a25"/>
          <path d="M478 195h10v135h-10ZM478 375h10v150h-10Z" fill="#6a4228"/>
          <rect x="520" y="20" width="8" height="320" fill="#333"/>
          <g fill="#3f2f28">
            <path d="M198 22H272V60L198 125Z"/>
            <path d="M198 160 272 80V185L198 232Z"/>
            <path d="M198 268 272 195V300L198 345Z"/>
            <path d="M198 380 272 305V425L198 465Z"/>
            <path d="M198 502 272 430V525L198 575Z"/>
            <path d="M198 612 272 540V625L198 690Z"/>
            <path d="M288 22H360L288 88Z"/>
            <path d="M288 125 365 60V170L288 250Z"/>
            <path d="M288 545 365 455V545L288 605Z"/>
            <path d="M380 60 462 22V105L380 170Z"/>
            <path d="M380 195 462 115V215L380 285Z"/>
            <path d="M380 315 462 235V325L380 395Z"/>
            <path d="M380 425 462 355V440L380 515Z"/>
            <path d="M380 555 462 470V555L380 635Z"/>
          </g>
          <ellipse cx="325" cy="350" rx="42" ry="78" fill="none" stroke="#2a2a2a" stroke-width="4"/>
          <path d="M305 320 325 375 345 320M325 375V300" fill="none" stroke="#2a2a2a" stroke-width="8"/>
          <rect x="55" y="755" width="220" height="95" fill="url(#vent)"/>
          <rect x="55" y="860" width="220" height="95" fill="url(#vent)"/>
          <rect x="55" y="960" width="220" height="90" fill="url(#vent)" opacity=".7"/>
          <rect x="55" y="1060" width="215" height="75" fill="url(#vent)" opacity=".7"/>
          <rect x="290" y="735" width="140" height="405" fill="#0a0a0a"/>
          <rect x="320" y="780" width="30" height="270" fill="url(#vent)"/>
          <path d="M340 1050h8v80h-8ZM240 1100h10v30h-10ZM258 1100h10v30h-10ZM90 965h12v25H90Z" fill="#8a6a3a"/>
        </g>

        <g transform="translate(730 150) scale(.33333)">
          <rect x="25" y="20" width="964" height="1120" fill="#0d0d0d"/>
          <rect x="25" y="20" width="964" height="42" fill="#f4a660"/>
          <rect x="140" y="25" width="160" height="36" fill="#d9663a"/>
          <rect x="615" y="30" width="180" height="36" fill="#d9663a"/>
          <rect x="25" y="60" width="964" height="12" fill="#2a1a10"/>
          <rect x="25" y="40" width="44" height="660" fill="#f8a55e"/>
          <path d="M25 40h30q14 0 14 14v106H25ZM25 585h44v90q0 22-22 22H25Z" fill="#c8582a"/>
          <rect x="70" y="70" width="75" height="590" fill="#0e0e0e"/>
          <rect x="100" y="70" width="24" height="30" fill="#a0b820"/>
          <circle cx="110" cy="365" r="18" fill="#333"/>
          <circle cx="102" cy="465" r="21" fill="#e8e8e8"/>
          <circle cx="160" cy="465" r="21" fill="#d8d8d8"/>
          <rect x="72" y="535" width="100" height="100" fill="#b35a60"/>
          <path d="M72 562h100M72 600h100" stroke="#e8b0b0" stroke-width="10"/>
          <rect x="72" y="630" width="100" height="12" fill="#5a5ac8"/>
          <path d="M145 67H240V300L228 310V645H180L170 385 145 350Z" fill="#c4e828"/>
          <rect x="172" y="67" width="30" height="230" fill="#b4b8b0"/>
          <rect x="208" y="67" width="28" height="230" fill="#b4b8b0"/>
          <rect x="172" y="385" width="12" height="200" fill="#c0c0c0"/>
          <rect x="208" y="390" width="8" height="200" fill="#d0d0d0"/>
          <path d="M145 470l30 40M145 540l30 40M195 490l20 30M195 555l20 30" stroke="#a8a830" stroke-width="8"/>
          <rect x="240" y="70" width="748" height="155" fill="#141414"/>
          <rect x="290" y="75" width="60" height="100" fill="url(#gold)"/>
          <rect x="540" y="70" width="80" height="60" fill="url(#gold)"/>
          <rect x="465" y="80" width="6" height="140" fill="#8a8a50"/>
          <path d="M470 145H988V240H470Z" fill="#1f1f1f"/>
          <rect x="650" y="132" width="40" height="8" fill="#e8e8e8"/>
          <rect x="875" y="130" width="113" height="8" fill="#f0f0f0"/>
          <rect x="240" y="225" width="410" height="425" fill="url(#olive)"/>
          <path d="M680 240H988V690L600 650 640 450Z" fill="#0a0a0a"/>
          <path d="M740 395H988V415H735ZM728 420H988V440H722ZM720 460H988V480H716Z" fill="#1a1a1a"/>
          <rect x="240" y="650" width="748" height="60" fill="#0b0b0b"/>
          <rect x="238" y="630" width="112" height="75" fill="url(#gold)"/>
          <rect x="535" y="655" width="60" height="30" fill="url(#gold)"/>
          <rect x="25" y="700" width="170" height="65" fill="#28141a"/>
          <rect x="85" y="650" width="70" height="40" fill="#555"/>
          <rect x="55" y="700" width="80" height="18" fill="#c22"/>
          <path d="M190 765 320 700H925V725L650 745 595 745Z" fill="#0c0c0c"/>
          <rect x="25" y="768" width="165" height="182" fill="#3a3a3a"/>
          <path d="M25 952 190 935V945L25 962Z" fill="#e88a40"/>
          <rect x="190" y="752" width="405" height="188" fill="url(#fins)"/>
          <path d="M595 740H650V905H595Z" fill="url(#silver)"/>
          <path d="M650 738 905 722V880L650 905Z" fill="url(#plate)"/>
          <path d="M905 722H925V880H905Z" fill="#8a7c22"/>
          <path d="M595 905 650 905 925 880 900 888 600 912Z" fill="#e88a40"/>
          <text x="698" y="826" transform="rotate(-3 698 826)" class="rtx" textLength="162" lengthAdjust="spacingAndGlyphs">GEFORCE RTX</text>
          <rect x="690" y="905" width="85" height="70" fill="#2f6e50"/>
          <path d="M25 1040 190 1020 700 975 988 1000V1140H25Z" fill="#e8a055"/>
          <path d="M230 1085H495L440 1132H200ZM360 1040H750L700 1098 530 1070ZM770 1030H988V1070H770ZM25 1105H195L150 1132H25ZM100 1050H150L160 1062H80ZM630 1005H670L660 1015H620Z" fill="#9c4a22"/>
          <path d="M230 1075H495V1085H230ZM355 1032H750V1042H355ZM25 1095H195V1105H25ZM775 1020H988V1030H775Z" fill="#f4b070"/>
        </g>
      </svg>

      <div class="r-status">
        <span>Zoom 78%</span>
        <div class="r-prog"><span>GPU Rendering (7589 MB / 24576 MB) (1309 KB, 50.46 秒, 143 个样本)</span><div class="bar"><i></i><b>53%</b></div></div>
      </div>
    </section>
  </div>

  <footer class="taskbar">
    <div class="tb"><svg viewBox="0 0 14 14"><path d="M1 2.500 6.200 1.800V6.700H1ZM7 1.700 13 .8V6.700H7ZM1 7.500h5.200v4.800L1 11.500ZM7 7.500h6v5.800l-6-.9Z" fill="#fff"/></svg></div>
    <div class="tb"><svg viewBox="0 0 14 14"><circle cx="8.500" cy="5.500" r="3.700" fill="none" stroke="#ddd" stroke-width="1.100"/><path d="M5.800 8.200 2 12" stroke="#ddd" stroke-width="1.300"/></svg></div>
    <div class="tb"><svg viewBox="0 0 14 14"><circle cx="7" cy="7" r="4" fill="none" stroke="#fff" stroke-width="1.300"/></svg></div>
    <div class="tb"><svg viewBox="0 0 14 14"><path d="M2 2h7v10H2Z" fill="none" stroke="#ccc"/><path d="M11 2h1.500v3H11ZM11 6h1.500v2H11ZM11 9h1.500v3H11Z" fill="#ccc"/></svg></div>
    <span class="tb-gap"></span>
    <div class="tb"><svg viewBox="0 0 14 14"><circle cx="7" cy="7" r="6.500" fill="#1e88d8"/><path d="M7 .5a6.500 6.500 0 0 1 6.500 6.500c0 2-3 2.500-4 1.500.5-2-1-3.500-3-3.500S1.500 6.500 1 8A6.500 6.500 0 0 1 7 .5Z" fill="#5ad09a"/><circle cx="7.500" cy="9" r="2.500" fill="#1c2f40"/></svg></div>
    <div class="tb"><svg viewBox="0 0 14 14"><path d="M1 2.500h5l1 1h6v9H1Z" fill="#f4c84a"/><rect x="1" y="5" width="12" height="7.500" fill="#f8d878"/><rect x="4" y="8" width="6" height="4.500" fill="#1e88d8"/></svg></div>
    <div class="tb"><svg viewBox="0 0 14 14"><path d="M1.500 4.500h11v9h-11Z" fill="#f5f5f5"/><path d="M4.500 5V3a2.500 2.500 0 0 1 5 0v2" fill="none" stroke="#f5f5f5"/><path d="M5 7h1.800v1.800H5Z" fill="#e8502a"/><path d="M7.200 7H9v1.800H7.200Z" fill="#6ab82a"/><path d="M5 9.200h1.800V11H5Z" fill="#2a90e0"/><path d="M7.200 9.200H9V11H7.200Z" fill="#f4b820"/></svg></div>
    <div class="tb"><svg viewBox="0 0 14 14"><rect x=".5" y="2.500" width="13" height="10" fill="#1e90d8"/><path d="M.5 5.500 7 1.500l6.500 4L7 9Z" fill="#fff"/></svg></div>
    <div class="tb"><svg viewBox="0 0 14 14"><rect x="1" y="1" width="12" height="12" rx="2" fill="#2878e0"/><path d="M3 3c2 1 3 3 4 4 1-2 2-3 4-4-.5 4-1.500 6-3 7l-1 1-1-1C4.500 9 3.500 7 3 3Z" fill="#fff"/></svg></div>
    <div class="tb active"><svg viewBox="0 0 14 14"><use href="#ksdot"/></svg></div>
    <div class="tb run"><svg viewBox="0 0 14 14"><rect x="2.500" y=".5" width="9" height="13" fill="#9aa6b0"/><rect x="3.500" y="1.500" width="7" height="3" fill="#2c4a60"/><path d="M4 6.500h1.500M6.500 6.500H8M9 6.500h1M4 9h1.500M6.500 9H8M4 11.500h1.500M6.500 11.500H8" stroke="#eef" stroke-width="1.100"/></svg></div>
    <div class="tb run"><span class="a-logo tbl">64</span></div>
    <div class="tray">
      <svg viewBox="0 0 12 12"><path d="M2 8l4-4 4 4" fill="none" stroke="#ccc"/></svg>
      <svg viewBox="0 0 12 12"><rect x="1" y="2" width="9" height="8" fill="none" stroke="#ccc"/><circle cx="5" cy="6" r="1.500" fill="#ccc"/><circle cx="9.500" cy="10" r="2" fill="#f09020"/></svg>
      <svg viewBox="0 0 12 12"><rect x="3" y="1.500" width="8" height="6" fill="none" stroke="#ccc"/><path d="M1 5v6h6" fill="none" stroke="#ccc"/></svg>
      <svg viewBox="0 0 12 12"><path d="M1 4.500h2L6 2v8L3 7.500H1Z" fill="#ccc"/><path d="M8 4c1 1 1 3 0 4M10 3c1.500 2 1.500 4 0 6" fill="none" stroke="#ccc"/></svg>
      <span class="tw zh">中</span>
      <div class="clock"><span>14:12</span><span>2021/4/3</span></div>
      <svg class="note" viewBox="0 0 14 14"><path d="M1 2h11v8H4l-3 2.500Z" fill="#ddd"/><circle cx="10" cy="10" r="3.400" fill="#2a2f3a" stroke="#ccc" stroke-width=".6"/></svg>
    </div>
  </footer>

  <div class="water"><span class="wm-c">值</span><span class="wm-t">什么值得买</span></div>
</main>
</body>
</html>
```
FILE: styles.css
```css
* { box-sizing: border-box; }
html, body { margin: 0; padding: 0; }
body { width: 1080px; height: 675px; overflow: hidden; background: #1d2f3f;
  font-family: Roboto, "Noto Sans CJK SC", sans-serif; font-size: 7.3px; letter-spacing: -.15px; color: #3a3a3a; line-height: 1; }
.defs { position: absolute; width: 0; height: 0; }
svg { display: block; flex: none; }
i { font-style: normal; }
tt { font: 6px "Liberation Mono", monospace; }

.desk { position: relative; width: 1080px; height: 675px; display: flex; flex-direction: column; overflow: hidden; filter: blur(.3px); }
.windows { position: relative; height: 652px; flex: none; }
.win { position: absolute; background: #fff; overflow: hidden; }

/* AIDA64 */
.aida { left: 0; top: 0; width: 277px; height: 652px; display: flex; flex-direction: column; border-left: 1px solid #7fb0cf; border-bottom: 1px solid #7fb0cf; }
.a-title { height: 18px; display: flex; align-items: center; gap: 4px; padding-left: 4px; color: #9a9a9a; font-size: 7.5px; letter-spacing: .35px; flex: none; }
.a-logo { width: 9px; height: 9px; background: #c8242c; color: #fff; font: bold 6.5px/9px "Liberation Sans", sans-serif; text-align: center; flex: none; letter-spacing: 0; }
.a-logo.sm { width: 8px; height: 8px; line-height: 8px; font-size: 6px; }
.a-logo.tbl { width: 14px; height: 14px; line-height: 14px; font-size: 10px; }
.a-menu { height: 11px; display: flex; gap: 9.200px; padding-left: 4px; align-items: center; color: #8f8f8f; flex: none; }
.a-tools { height: 17px; display: flex; align-items: center; padding-left: 2px; flex: none; background: #fff; white-space: nowrap; }
.at { width: 11px; height: 11px; margin: 0 3.200px; }
.at.big { width: 13px; height: 13px; margin: 0 1px; }
.at.mlt { margin-left: 5px; }
.at.mlt2 { margin-left: 6px; }
.a-vsep { width: 1px; height: 14px; background: #ccc; margin: 0 3px 0 6px; }
.a-tl { margin-left: 2px; font-size: 7.800px; flex: none; }
.a-body { flex: 1; display: flex; min-height: 0; }
.a-left { width: 106px; flex: none; }
.a-tabs { height: 12px; display: flex; padding-left: 2px; align-items: flex-end; border-bottom: 1px solid #ddd; }
.a-tab { height: 11px; padding: 2px 3px 0; white-space: nowrap; flex: none; }
.a-tab.on { width: 24px; background: #fff; }
.a-tab.off { background: #eee; margin-left: 3px; width: 27px; }
.tree { padding-top: 1.600px; }
.t { height: 10.150px; display: flex; align-items: center; white-space: nowrap; }
.t.root { padding-left: 4px; gap: 3px; }
.t.l1 { padding-left: 4px; }
.t.l2 { padding-left: 25px; }
.ar { width: 9px; color: #888; font-size: 8px; line-height: 8px; text-align: center; margin-right: 1px; }
.ic { width: 9.500px; height: 9.500px; margin-right: 1.500px; flex: none; }
.t.l1 .ic { margin-right: 3px; }
.sel { display: flex; align-items: center; background: #d9eefb; padding-right: 2px; margin-left: -1px; }
.a-split { width: 4px; flex: none; background: #ececec; border-right: 1px solid #a8a8a8; }
.a-right { flex: 1; min-width: 0; }
.a-head { height: 12.500px; display: flex; align-items: center; border-bottom: 1px solid #e0e0e0; padding-left: 4px; }
.h1 { width: 108px; border-right: 1px solid #ddd; height: 100%; display: flex; align-items: center; }
.h2 { padding-left: 4px; }
.list { padding-top: .2px; }
.r { height: 10.670px; display: flex; align-items: center; white-space: nowrap; padding-left: 12px; }
.r.s { padding-left: 3px; }
.r .n { width: 104px; display: flex; align-items: center; flex: none; overflow: hidden; }
.r .n .ic { margin-right: 1px; }
.r.s .n { width: 113px; }
.v { white-space: pre; }

/* KeyShot */
.ks { left: 277px; top: 0; width: 803px; height: 652px; display: flex; flex-direction: column; border-top: 1px solid #8c9aa6; background: #f7f7f7; }
.k-title { height: 16px; display: flex; align-items: center; padding-left: 4px; background: #fff; flex: none; }
.ki { width: 8px; height: 8px; margin-right: 4px; }
.k-name { color: #8a8a8a; white-space: pre; font-size: 7.600px; }
.ctl { margin-left: auto; display: flex; gap: 16px; }
.ctl svg { width: 9px; height: 9px; }
.faded { color: #a8a8a8; padding-right: 3px; }
.k-menu { height: 14px; display: flex; gap: 7px; padding-left: 2px; align-items: center; background: #f2f2f2; flex: none; color: #222; }
.k-tools { height: 36px; display: flex; align-items: stretch; padding: 1px 0 1px 4px; background: #f5f5f5; border-top: 1px solid #e4e4e4; border-bottom: 1px solid #d6d6d6; flex: none; }
.sep { width: 1px; margin: 1px .5px; background: #dcdcdc; flex: none; }
.btn, .grp { display: flex; flex-direction: column; align-items: center; flex: none; color: #9a9a9a; }
.btn svg { width: 13px; height: 13px; margin-top: 1px; }
.btn svg.wideic { width: 28px; }
.btn.act svg { margin-top: 0; }
.lab { display: flex; align-items: center; justify-content: center; text-align: center; line-height: 8.700px; color: #3a3a3a; white-space: nowrap; height: 14px; margin-top: 1px; }
.dim .lab { color: #bdbdbd; }
.lab.blk { color: #222; }
.grp .lab { color: #222; height: 18px; margin-top: 1px; gap: 2px; }
.act { background: #dcedfb; border: 1px solid #d0e6f8; border-bottom: 2px solid #1a86e0; }
.select { height: 10px; width: 30px; background: #fff; border: 1px solid #bdbdbd; color: #444; font: 6.500px/8px "Liberation Mono", monospace; padding-left: 2px; display: flex; justify-content: space-between; margin-top: 1px; white-space: nowrap; letter-spacing: 0; }
.select.wide { width: 37px; letter-spacing: -.2px; }
.select i { font-size: 6px; margin-right: 1px; }
.fov { display: flex; gap: 3px; margin-top: 1px; align-items: center; height: 10px; }
.fov svg { width: 10px; height: 10px; }
.num { width: 23px; height: 10px; border: 1px solid #bbb; background: #fff; font: 7px/8px "Liberation Mono", monospace; padding-left: 2px; }
.w20 { width: 20px; } .w22 { width: 22px; } .w23 { width: 23px; } .w24 { width: 24px; } .w25 { width: 25px; }
.w26 { width: 26px; } .w27 { width: 27px; } .w29 { width: 29px; } .w30 { width: 30px; } .w32 { width: 32px; }
.w34 { width: 34px; } .w36 { width: 36px; } .w37 { width: 37px; } .w38 { width: 38px; } .w39 { width: 39px; }
.w40 { width: 40px; } .w42 { width: 42px; }

.k-body { height: 550px; display: flex; flex: none; min-height: 0; }
.pane { flex: none; background: #f8f8f8; overflow: hidden; display: flex; flex-direction: column; }
.lib { width: 190px; border-right: 1px solid #dcdcdc; }
.view { flex: 1; background: #5d5d5d; }
.scene { width: 183px; background: #fff; }
.p-title { height: 12px; background: #f0f0f0; display: flex; align-items: center; padding: 0 4px; position: relative; flex: none; }
.p-title b { position: absolute; left: 0; right: 0; text-align: center; font-weight: 600; }
.p-ic { margin-left: auto; display: flex; gap: 4px; position: relative; }
.p-ic svg { width: 8px; height: 8px; }
.lib .p-ic { padding-right: 4px; }
.tabs { height: 24px; display: flex; padding-left: 4px; border-bottom: 1px solid #e2e2e2; margin-right: 6px; flex: none; }
.tab { width: 26px; display: flex; flex-direction: column; align-items: center; gap: 1px; padding-top: 2px; }
.tab svg { width: 12px; height: 12px; }
.tab.on { border-bottom: 2px solid #1a86e0; }
.six { padding-left: 5px; margin: 0; }
.six .tab { width: 29.700px; }
.search-row { height: 12px; margin: 7px 0 6px 5px; display: flex; align-items: center; gap: 1px; flex: none; }
.field { height: 12px; width: 142px; background: #fff; border: 1px solid #c8c8c8; display: flex; align-items: center; gap: 3px; padding-left: 2px; margin-right: 2px; color: #999; }
.field svg { width: 8px; height: 8px; }
.si { width: 11px; height: 11px; }
.mtree { height: 161px; margin-left: 4px; margin-right: 6px; border: 1px solid #c8c8c8; flex: none; background: #fff; overflow: hidden; }
.m { height: 10.670px; display: flex; align-items: center; padding-left: 8px; color: #333; white-space: nowrap; font: 7.500px "Liberation Sans", sans-serif; letter-spacing: 0; }
.m:nth-child(odd) { background: #f4f4f4; }
.m i { width: 9px; color: #888; text-align: center; margin-right: 2px; flex: none; font-size: 8px; }
.m i.leaf { height: 1px; background: #bbb; margin-left: 3px; width: 6px; margin-right: 2px; }
.m.sub { padding-left: 17px; background: linear-gradient(#ccc, #ccc) 12px 0 / 1px 100% no-repeat #fff; }
.m.sub:nth-child(odd) { background: linear-gradient(#ccc, #ccc) 12px 0 / 1px 100% no-repeat #f8f8f8; }
.sel2 span { background: #a8d2f5; flex: 1; height: 100%; display: flex; align-items: center; padding-left: 2px; margin-left: -2px; }
.dots { height: 7px; display: flex; justify-content: center; align-items: center; gap: 1.500px; margin-right: 5px; flex: none; }
.dots i { width: 3px; height: 3px; border-radius: 50%; background: #666; }
.grid { height: 300px; margin-left: 4px; margin-right: 4px; border-left: 1px solid #c8c8c8; border-bottom: 1px solid #c8c8c8; background: #fff; display: grid; grid-template-columns: repeat(4, 42.700px); overflow: hidden; flex: none; align-content: start; }
.c { height: 47.700px; display: flex; flex-direction: column; align-items: center; overflow: hidden; }
.c span { height: 11.700px; line-height: 11.700px; color: #333; flex: none; letter-spacing: 0; font-family: "Liberation Sans", sans-serif; }
.c.top { height: 17px; }
.c.top .tile { height: 5.300px; background-position: bottom; }
.c.top .tile i { margin-top: -30.700px; }
.c.picked { background: #9fd0f7; }
.tile { width: 36px; height: 36px; background: linear-gradient(#a4a4a4 60%, #b6b6b6); flex: none; overflow: hidden; padding: 3px; }
.tile i { display: block; width: 30px; height: 30px; border-radius: 50%;
  background:
    radial-gradient(circle at 42% 32%, rgba(255,255,255,.9) 0 4%, rgba(255,255,255,0) 20%),
    conic-gradient(from 20deg, rgba(0,0,0,.17) 0 4%, transparent 4% 25%, rgba(0,0,0,.17) 25% 29%, transparent 29% 50%, rgba(0,0,0,.17) 50% 54%, transparent 54% 75%, rgba(0,0,0,.17) 75% 79%, transparent 79%),
    radial-gradient(circle at 42% 35%, var(--b) 0 35%, var(--d) 100%);
  box-shadow: 3px 4px 4px rgba(70,70,70,.45); }
.red { --b: #b01620; --d: #600c12; }
.wine { --b: #681218; --d: #30080a; }
.gray { --b: #8a8580; --d: #4c4946; }
.slate { --b: #5a6070; --d: #2c303a; }
.silver { --b: #d8d8d8; --d: #a0a0a0; }
.gold { --b: #d0a820; --d: #80660c; }
.blue { --b: #1a70cc; --d: #0c4284; }
.green { --b: #3cb81e; --d: #207a0e; }
.dark { --b: #6a6a6a; --d: #3e3e3e; }
.violet { --b: #3a14c0; --d: #1e0c78; }
.scarlet { --b: #d01818; --d: #800c0c; }
.amber { --b: #b06a2a; --d: #6a3a10; }
.zoomrow { height: 15px; display: flex; align-items: center; padding-left: 3px; flex: none; }
.zoomrow .si { width: 10px; height: 10px; margin-left: .5px; }
.zoomrow .si.mz { margin-left: 8px; }
.zoomrow .si.mz2 { margin-left: 6px; }
.slider { width: 100px; height: 1px; background: #bbb; position: relative; margin: 0 1px; }
.slider i { position: absolute; left: 31px; top: -2.500px; width: 6px; height: 6px; border-radius: 50%; background: #555; }

.scene-row { height: 12px; margin-top: 7px; display: flex; align-items: center; padding-left: 12px; gap: 3px; flex: none; }
.dbl { color: #888; font-size: 9px; }
.select.disp { width: 34px; margin: 0 2px 0 0; font: 7.300px/8px "Noto Sans CJK SC", sans-serif; padding: 0 1px 0 5px; }
.sf { flex: 1; width: auto; margin: 0; }
.stripes { margin-top: 0; height: 133px; display: flex; flex-direction: column; flex: none; }
.stripes i { height: 9.500px; background: #f3f3f3; margin-bottom: 9.500px; }
.rule { margin-top: 73px; height: 1px; background: #ddd; flex: none; }
.mini { margin: 43px 9px 0 auto; width: 60px; height: 10px; border: 1px solid #ccc; flex: none; }

.k-foot { height: 35px; flex: none; display: flex; background: #fafafa; border-top: 1px solid #e8e8e8; padding: 1px 0 2px 10px; }
.fb { display: flex; flex-direction: column; align-items: center; flex: none; }
.fb svg { width: 20px; height: 20px; }
.fb.act svg { margin-top: -1px; }
.fb span { margin-top: 2px; font-size: 7px; }
.cloud { width: 28px; padding-top: 1px; }
.f-gap { width: 235px; flex: none; }
.f-fill { flex: 1; }
.fb .mono { font: 6px/7px "Liberation Mono", monospace; margin-top: 3px; letter-spacing: -.2px; }
.fb.dim { color: #bbb; }

.monitor { left: 527px; top: 480px; width: 482px; height: 88px; background: #fff; box-shadow: 0 0 2px rgba(0,0,0,.35); }
.m-btns { position: absolute; left: 378px; top: 70px; display: flex; gap: 3px; }
.mbtn { width: 65px; height: 12px; border: 1px solid #ccc; background: #f4f4f4; display: flex; align-items: center; justify-content: center; gap: 2px; }
.mbtn.short { width: 30px; }

.render { left: 392px; top: 122px; width: 670px; height: 422px; display: flex; flex-direction: column; background: #fff; border: 1px solid #8a8a8a; box-shadow: 0 0 4px rgba(0,0,0,.55); }
.r-title { height: 14.500px; display: flex; align-items: center; padding-left: 4px; flex: none; color: #222; }
.r-ctl { color: #333; gap: 17px; padding-right: 10px; }
.r-tools { height: 19px; background: #f5f5f5; display: flex; align-items: center; padding-left: 8px; flex: none; border-top: 1px solid #eee; }
.r-tools svg { width: 11px; height: 11px; margin: 0 .75px; }
.r-tools svg.gapl { margin-left: 3.250px; }
.r-slider { width: 44px; height: 1px; background: #888; position: relative; flex: none; }
.r-slider i { position: absolute; left: 28px; top: -2.500px; width: 6px; height: 6px; background: #444; border-radius: 50%; }
.shot { width: 667px; height: 374px; margin-left: 0; flex: none; }
.rtx { font: bold 30px "Liberation Sans", sans-serif; fill: #f0f0f0; letter-spacing: 0; }
.r-status { height: 13px; display: flex; align-items: center; justify-content: space-between; padding: 0 13px 0 1px; flex: none; font: 5.800px/1 "Liberation Mono", "Noto Sans CJK SC", monospace; color: #222; letter-spacing: 0; }
.r-prog { display: flex; align-items: center; gap: 4px; white-space: nowrap; }
.bar { width: 62px; height: 8px; border: 1px solid #888; background: #fff; position: relative; }
.bar i { display: block; width: 32px; height: 100%; background: #0a6cf0; }
.bar b { position: absolute; left: 27px; top: 1px; font-weight: normal; color: #123; }

/* Taskbar */
.taskbar { height: 23px; flex: none; display: flex; background: linear-gradient(90deg, #1e3342, #1d2f40 50%, #1a2a44); }
.tb { width: 27.300px; height: 23px; display: flex; align-items: center; justify-content: center; flex: none; padding-top: 1px; }
.tb svg { width: 13px; height: 13px; }
.tb-gap { width: 1.500px; flex: none; }
.tb.active { background: #3f505e; border-bottom: 2px solid #6fb4e8; }
.tb.run { border-bottom: 2px solid #6fb4e8; margin: 0 1px; width: 25.300px; }
.tray { margin-left: auto; display: flex; align-items: center; gap: 3px; padding-right: 11px; color: #ddd; }
.tray svg { width: 10px; height: 10px; }
.tw { width: 10px; text-align: center; font-size: 9px; }
.zh { color: #ddd; margin: 0 2px; }
.clock { width: 38px; display: flex; flex-direction: column; align-items: center; gap: 4px; font-size: 7px; color: #e4e4e4; margin: 0 7px 0 5px; }
.tray .note { width: 13px; height: 13px; }

.water { position: absolute; left: 910px; top: 638px; display: flex; align-items: center; pointer-events: none; }
.wm-c { width: 30px; height: 30px; border-radius: 50%; background: rgba(255,255,255,.95); color: #2a3a4a; font: 20px/30px "Noto Sans CJK SC", sans-serif; text-align: center; }
.wm-t { margin-left: 13px; font: 300 23.500px/30px "Noto Sans CJK SC", sans-serif; color: rgba(255,255,255,.8); white-space: nowrap; }
```
